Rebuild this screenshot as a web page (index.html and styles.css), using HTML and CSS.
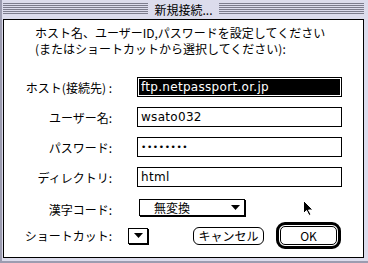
FILE: index.html
```html
<!DOCTYPE html>
<html lang="ja">

<head>
    <meta charset="UTF-8">
    <meta name="viewport" content="width=device-width, initial-scale=1.0">
    <link rel="stylesheet" href="styles.css">

    <title>新規接続...</title>
</head>

<body>
    <div class="window">
        <div class="titlebar">
            <span class="title">新規接続...</span>
        </div>
        <div class="content">
            <p class="message">ホスト名、ユーザーID,パスワードを設定してください<br>(またはショートカットから選択してください):</p>

            <div class="form">
                <label>ホスト(接続先) :</label>
                <div class="field selected">ftp.netpassport.or.jp</div>

                <label>ユーザー名:</label>
                <div class="field">wsato032</div>

                <label>パスワード:</label>
                <div class="field dots">••••••••</div>

                <label>ディレクトリ:</label>
                <div class="field">html</div>

                <label class="popup-label">漢字コード:</label>
                <div class="popup">
                    <span>無変換</span>
                    <svg class="arrow" width="9" height="5" viewBox="0 0 9 5"><path d="M0 0h9L4.5 5z" fill="#000"/></svg>
                </div>
            </div>

            <div class="actions">
                <label>ショートカット:</label>
                <div class="popup small">
                    <svg class="arrow" width="9" height="5" viewBox="0 0 9 5"><path d="M0 0h9L4.5 5z" fill="#000"/></svg>
                </div>
                <button class="btn cancel">キャンセル</button>
                <div class="default-ring">
                    <button class="btn ok">OK</button>
                </div>
            </div>

            <!-- mouse pointer -->
            <svg class="cursor" width="11" height="16" viewBox="0 0 11 16">
                <path d="M0.5 0.5v13l3-3 2.5 5 2-1-2.5-4.5h4.5z" fill="#000" stroke="#fff" stroke-width="1"/>
            </svg>
        </div>
    </div>
</body>

</html>
```

FILE: styles.css
```css
body {
    margin: 0;
    font-family: "Noto Sans CJK JP", "Noto Sans", sans-serif;
    font-size: 12px;
    color: #000;
    background-color: #dcdcec;
}

.window {
    width: 368px;
    height: 263px;
    box-sizing: border-box;
    display: flex;
    flex-direction: column;
    padding: 0 4px 5px 3px;
    background-color: #dcdcec;
    box-shadow: inset 2px 0 0 #9c9cb0, inset 0 -2px 0 #9c9cb0;
}

.titlebar {
    height: 19px;
    display: flex;
    align-items: center;
    justify-content: center;
    background: repeating-linear-gradient(to bottom, #7c7c8c 0, #7c7c8c 1px, transparent 1px, transparent 2px);
    background-size: 100% 12px;
    background-position: 0 3px;
    background-repeat: no-repeat;
}

.title {
    background-color: #dcdcec;
    padding: 0 6px;
    line-height: 19px;
}

.content {
    flex: 1;
    position: relative;
    background-color: #fff;
    border: 1px solid #000;
}

.message {
    margin: 5px 0 0 31px;
    line-height: 16px;
}

.form {
    display: grid;
    grid-template-columns: 108px 205px;
    grid-auto-rows: 20px;
    column-gap: 25px;
    row-gap: 10px;
    margin-top: 20px;
}

label {
    text-align: right;
    align-self: center;
    white-space: nowrap;
}

.field {
    box-sizing: border-box;
    border: 1px solid #000;
    padding: 0 3px;
    font-family: "DejaVu Sans", sans-serif;
    font-size: 12px;
    letter-spacing: 0.3px;
    line-height: 18px;
    white-space: nowrap;
}

.field.selected {
    background-color: #000;
    color: #fff;
    box-shadow: inset 0 0 0 1px #fff;
}

.field.dots {
    font-size: 9px;
    letter-spacing: 0.6px;
    line-height: 18px;
}

.popup-label {
    margin-top: 4px;
}

.popup {
    box-sizing: border-box;
    height: 17px;
    margin: 2px 0 0 2px;
    width: 106px;
    border: 1px solid #000;
    box-shadow: 1px 1px 0 #000;
    display: flex;
    align-items: center;
    justify-content: space-between;
    padding: 0 4px 0 14px;
}

.popup.small {
    width: 20px;
    height: 16px;
    margin: 0 0 0 16px;
    padding: 0;
    justify-content: center;
}

.actions {
    display: flex;
    align-items: center;
    margin-top: 5px;
}

.actions label {
    width: 108px;
}

.btn {
    font-family: "Noto Sans CJK JP", "Noto Sans", sans-serif;
    font-size: 12px;
    color: #000;
    background-color: #fff;
    border: 1px solid #000;
    padding: 0;
    line-height: 15px;
}

.cancel {
    width: 71px;
    height: 18px;
    border-radius: 6px;
    margin-left: 45px;
}

.default-ring {
    margin-left: 12px;
    border: 3px solid #000;
    border-radius: 9px;
    padding: 1px;
    display: flex;
}

.ok {
    width: 57px;
    height: 19px;
    border-radius: 5px;
}

.cursor {
    position: absolute;
    left: 299px;
    top: 180px;
}
```
